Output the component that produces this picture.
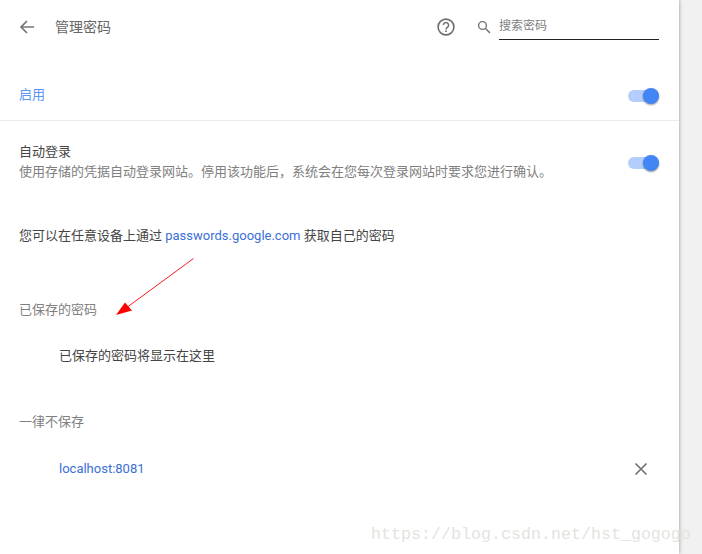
<div class="page">
  <main class="panel">
    <header class="top">
      <svg class="back" width="16" height="16" viewBox="0 0 16 16"><path d="M15 8H2M8 2 2 8l6 6" fill="none" stroke="#757575" stroke-width="1.7"/></svg>
      <h1>管理密码</h1>
      <svg class="help" width="20" height="20" viewBox="0 0 20 20"><circle cx="10" cy="10" r="7.9" fill="none" stroke="#6e6e6e" stroke-width="1.6"/><path d="M7.4 8.1a2.6 2.6 0 1 1 4 2.2c-.9.6-1.4 1-1.4 2.1" fill="none" stroke="#6e6e6e" stroke-width="1.5"/><rect x="9.2" y="13.4" width="1.6" height="1.6" fill="#6e6e6e"/></svg>
      <svg class="search" width="14" height="14" viewBox="0 0 14 14"><circle cx="5.5" cy="5.5" r="3.9" fill="none" stroke="#757575" stroke-width="1.4"/><path d="m8.5 8.5 4.4 4.4" stroke="#757575" stroke-width="1.5"/></svg>
      <div class="input">搜索密码</div>
    </header>

    <section class="row enable">
      <span class="blue">启用</span>
      <span class="toggle low"><i></i></span>
    </section>

    <section class="row auto">
      <div class="copy">
        <div class="title">自动登录</div>
        <div class="desc">使用存储的凭据自动登录网站。停用该功能后，系统会在您每次登录网站时要求您进行确认。</div>
      </div>
      <span class="toggle"><i></i></span>
    </section>

    <p class="info">您可以在任意设备上通过 <a href="#top">passwords.google.com</a> 获取自己的密码</p>

    <h2 class="saved">已保存的密码</h2>
    <p class="empty">已保存的密码将显示在这里</p>

    <h2 class="never">一律不保存</h2>
    <div class="site">
      <a href="#top">localhost:8081</a>
      <svg width="14" height="14" viewBox="0 0 14 14"><path d="m1.5 1.5 11 11M12.5 1.5l-11 11" stroke="#6e6e6e" stroke-width="1.6"/></svg>
    </div>
  </main>

  <svg class="arrow" width="100" height="70" viewBox="0 0 100 70"><path d="M93.5 8.5 26 58" stroke="#f00" stroke-width="0.9" fill="none"/><path d="M16 65 25 52.5 32 60.5Z" fill="#f00"/></svg>
  <div class="mark">https://blog.csdn.net/hst_gogogo</div>
</div>

<style>
  :global(body) { margin: 0; background: #f1f1f1; }
  .page {
    position: relative;
    width: 702px;
    height: 554px;
    overflow: hidden;
    font-family: Roboto, "Noto Sans CJK SC", sans-serif;
    font-size: 13px;
    color: #444;
  }
  .panel {
    width: 679px;
    height: 554px;
    background: #fff;
    box-shadow: 0 0 4px rgba(0, 0, 0, .4);
  }
  .top {
    display: flex;
    align-items: center;
    height: 54px;
    padding: 0 20px 0 19px;
  }
  .back { flex: none; }
  h1 { margin: 0 0 2px 20px; font-size: 14px; font-weight: 400; color: #666; flex: 1; }
  .help { margin-right: 21px; }
  .search { margin-right: 8px; margin-top: -1px; }
  .input {
    width: 160px;
    height: 26px;
    line-height: 24px;
    box-sizing: border-box;
    color: #808080;
    font-size: 12px;
    border-bottom: 1px solid #222;
    margin-bottom: 1px;
  }
  .row {
    display: flex;
    align-items: center;
    justify-content: space-between;
    padding: 0 20px 0 19px;
  }
  .enable { height: 50px; padding-top: 16px; border-bottom: 1px solid #ebebeb; }
  .blue { color: #5a94f5; margin-bottom: 4px; }
  .low { margin-top: 2px; }
  .auto { height: 84px; }
  .copy { margin-bottom: 2px; }
  .title { color: #444; line-height: 20px; margin-top: -1px; }
  .desc { color: #808080; line-height: 20px; }
  .toggle {
    position: relative;
    display: block;
    flex: none;
    width: 31px;
    height: 12px;
    border-radius: 6px;
    background: #b3cefb;
  }
  .toggle i {
    position: absolute;
    right: 0;
    top: -2px;
    width: 16px;
    height: 16px;
    border-radius: 50%;
    background: #4285f4;
    box-shadow: 0 1px 2px rgba(0, 0, 0, .4);
  }
  .info { margin: 0; padding: 19px 0 0 19px; line-height: 24px; color: #444; }
  a { color: #3b6fd6; text-decoration: none; }
  h2 { margin: 0; font-size: 13px; font-weight: 400; color: #808080; line-height: 20px; }
  .saved { padding: 52px 0 0 19px; }
  .empty { margin: 0; padding: 26px 0 0 59px; line-height: 20px; color: #444; }
  .never { padding: 46px 0 0 19px; }
  .site {
    display: flex;
    align-items: center;
    justify-content: space-between;
    padding: 27px 31px 0 59px;
    line-height: 20px;
  }
  .arrow { position: absolute; left: 100px; top: 250px; }
  .mark {
    position: absolute;
    left: 371px;
    top: 524px;
    font-family: "Liberation Mono", monospace;
    font-size: 16.67px;
    line-height: 22px;
    color: #e4e4e0;
    white-space: nowrap;
  }
</style>
